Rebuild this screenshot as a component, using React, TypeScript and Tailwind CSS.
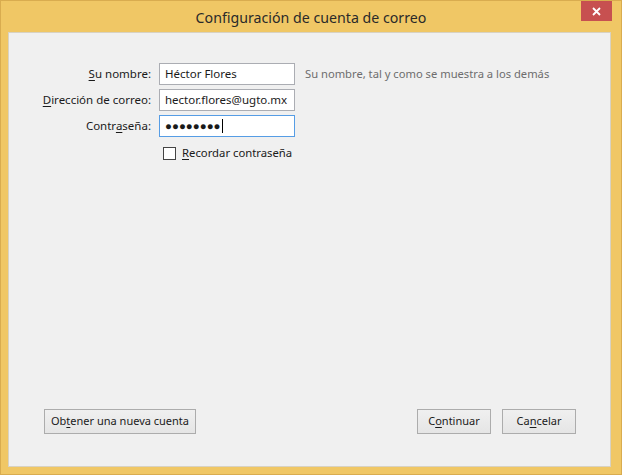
import React from "react";

const font = { fontFamily: '"Noto Sans", "Open Sans", sans-serif' };

function Field({ label, accessKey, value, focused, hint }: { label: string; accessKey: number; value: string; focused?: boolean; hint?: string }) {
  const before = label.slice(0, accessKey);
  const key = label.slice(accessKey, accessKey + 1);
  const after = label.slice(accessKey + 1);
  return (
    <>
      <label className="text-right text-[11.5px] text-[#1a1a1a] leading-[22px] whitespace-nowrap">
        {before}
        <span className="underline underline-offset-2">{key}</span>
        {after}
      </label>
      <div
        className={`h-[22px] flex items-center px-[5px] bg-white border text-[11.5px] text-[#1a1a1a] whitespace-nowrap overflow-hidden ${
          focused ? "border-[#569de5]" : "border-[#abadb3]"
        }`}
      >
        {value}
        {focused && <span className="w-px h-[14px] bg-black ml-px" />}
      </div>
      <div className="text-[11.2px] text-[#6d6d6d] leading-[22px] pl-[2px] whitespace-nowrap">{hint}</div>
    </>
  );
}

function Button({ children, className = "" }: { children: React.ReactNode; className?: string }) {
  return (
    <button
      className={`h-[25px] px-[6px] text-[11px] text-[#1a1a1a] whitespace-nowrap border border-[#acacac] bg-gradient-to-b from-[#f0f0f0] to-[#e5e5e5] ${className}`}
    >
      {children}
    </button>
  );
}

export default function App() {
  return (
    <div style={font} className="w-[622px] h-[475px] bg-[#f0c765] border border-[#d9ac4f] flex flex-col">
      {/* Title bar */}
      <div className="h-[31px] grid grid-cols-[1fr_auto_1fr]">
        <div />
        <div className="text-[14.2px] text-[#2a2a2a] leading-[33px]">Configuración de cuenta de correo</div>
        <div className="flex justify-end pr-[9px]">
          <div className="w-[31px] h-[20px] bg-[#c75050] flex items-center justify-center">
            <svg width="9" height="9" viewBox="0 0 9 9">
              <path d="M1 1 L8 8 M8 1 L1 8" stroke="white" strokeWidth="1.8" />
            </svg>
          </div>
        </div>
      </div>

      {/* Client area */}
      <div className="flex-1 ml-[7px] mr-[10px] mb-[7px] bg-[#f0f0f0] border border-[#d8d2c2] flex flex-col">
        <div className="pt-[30px] grid grid-cols-[142px_136px_1fr] gap-x-[8px] gap-y-[4px] items-center">
          <Field label="Su nombre:" accessKey={0} value="Héctor Flores" hint="Su nombre, tal y como se muestra a los demás" />
          <Field label="Dirección de correo:" accessKey={0} value="hector.flores@ugto.mx" />
          <Field label="Contraseña:" accessKey={5} value="●●●●●●●●" focused />
          <div />
          <div className="col-span-2 flex items-center gap-[6px] pl-[4px] pt-[4px] whitespace-nowrap">
            <span className="w-[13px] h-[13px] border border-[#444] bg-white" />
            <span className="text-[11.3px] text-[#1a1a1a]">
              <span className="underline underline-offset-2">R</span>ecordar contraseña
            </span>
          </div>
        </div>

        <div className="mt-auto mb-[32px] flex items-center pl-[35px] pr-[34px]">
          <Button>
            Ob<span className="underline underline-offset-2">t</span>ener una nueva cuenta
          </Button>
          <div className="flex-1" />
          <Button className="w-[74px] px-0">
            C<span className="underline underline-offset-2">o</span>ntinuar
          </Button>
          <Button className="w-[74px] px-0 ml-[11px]">
            Ca<span className="underline underline-offset-2">n</span>celar
          </Button>
        </div>
      </div>
    </div>
  );
}
